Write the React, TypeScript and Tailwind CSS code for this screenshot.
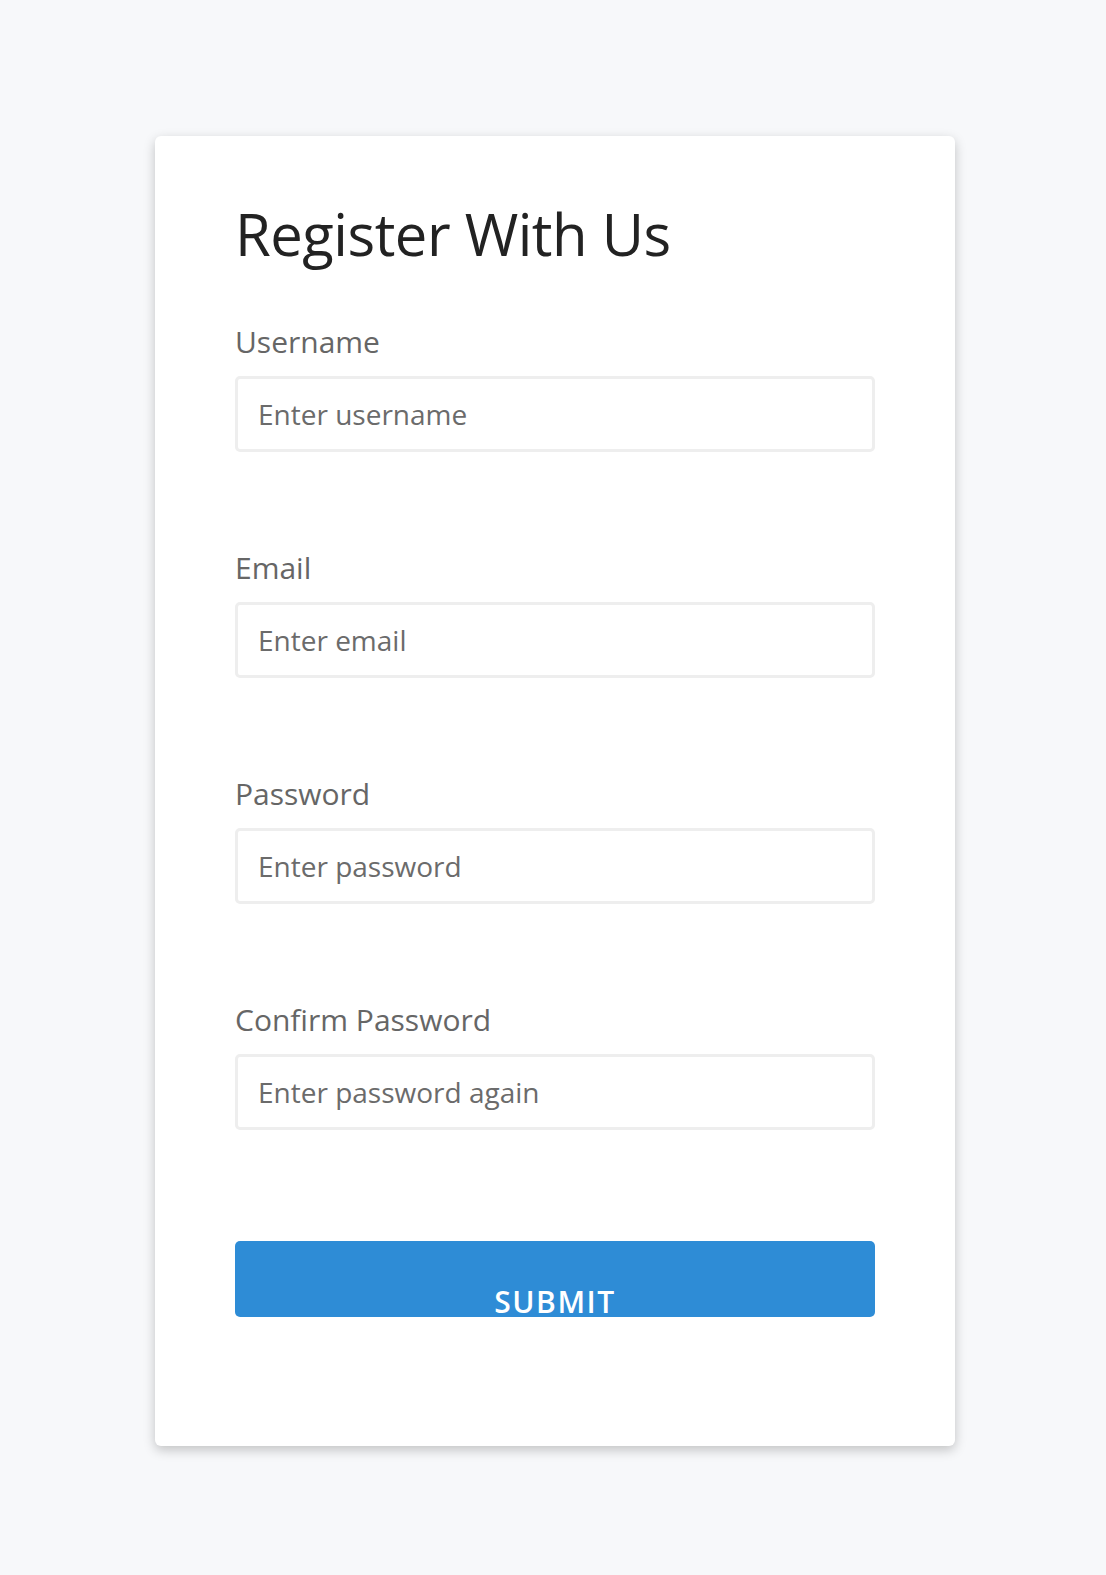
import { useState } from 'react'

const font = { fontFamily: '"Open Sans", "Liberation Sans", sans-serif' }

type Field = {
  id: string
  label: string
  type: string
  placeholder: string
}

const fields: Field[] = [
  { id: 'username', label: 'Username', type: 'text', placeholder: 'Enter username' },
  { id: 'email', label: 'Email', type: 'email', placeholder: 'Enter email' },
  { id: 'password', label: 'Password', type: 'password', placeholder: 'Enter password' },
  { id: 'password2', label: 'Confirm Password', type: 'password', placeholder: 'Enter password again' },
]

export default function App() {
  const [values, setValues] = useState<Record<string, string>>({})

  return (
    <div className="min-h-screen bg-[#f7f8fa] pt-[136px] pb-[130px] pl-[4px]" style={font}>
      <div className="mx-auto w-[800px] rounded-[6px] bg-white px-[80px] pt-[69px] pb-[129px] shadow-[0_4px_12px_rgba(0,0,0,0.22)]">
        <h1 className="text-[58px] leading-none font-normal tracking-[-0.5px] text-[#222]">Register With Us</h1>

        <form className="mt-[64px] flex flex-col gap-[101px]" onSubmit={(e) => e.preventDefault()}>
          {fields.map((f) => (
            <div key={f.id} className="flex flex-col gap-[19px]">
              <label htmlFor={f.id} className="text-[30px] leading-none text-[#666]">
                {f.label}
              </label>
              <input
                id={f.id}
                type={f.type}
                placeholder={f.placeholder}
                value={values[f.id] ?? ''}
                onChange={(e) => setValues({ ...values, [f.id]: e.target.value })}
                className="h-[76px] w-full rounded-[5px] border-[3px] border-[#eeeeee] bg-white px-[20px] text-[28px] text-[#333] outline-none placeholder:text-[#6b6b6b]"
              />
            </div>
          ))}

          <button
            type="submit"
            className="mt-[10px] block h-[76px] w-full overflow-hidden rounded-[5px] bg-[#2e8cd6] pt-[45px] text-center text-[30px] leading-none font-semibold tracking-[1.5px] text-white"
          >
            <span className="block">SUBMIT</span>
          </button>
        </form>
      </div>
    </div>
  )
}
